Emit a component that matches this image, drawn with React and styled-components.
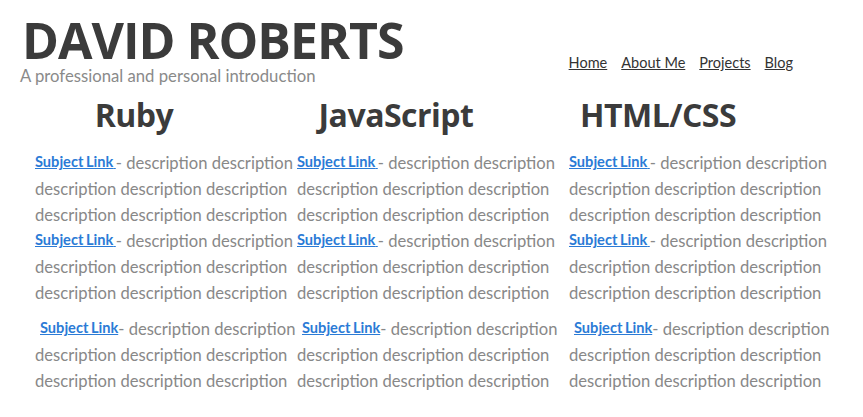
import React from 'react';
import styled, { createGlobalStyle } from 'styled-components';

const GlobalStyle = createGlobalStyle`
  body {
    margin: 0;
    background: #ffffff;
    font-family: 'Lato', 'Open Sans', sans-serif;
  }
`;

const subjects = ['Ruby', 'JavaScript', 'HTML/CSS'];
const entries = [{ spaced: false }, { spaced: false }, { spaced: true }];
const rest = 'description description description';

function App() {
  return (
    <Page>
      <GlobalStyle />
      <Header>
        <Brand>
          <Title>DAVID ROBERTS</Title>
          <Tagline>A professional and personal introduction</Tagline>
        </Brand>
        <Nav>
          <NavLink href="#">Home</NavLink>
          <NavLink href="#">About Me</NavLink>
          <NavLink href="#">Projects</NavLink>
          <NavLink href="#">Blog</NavLink>
        </Nav>
      </Header>

      <Headings>
        {subjects.map((s) => (
          <Heading key={s}>{s}</Heading>
        ))}
      </Headings>

      <Columns>
        {subjects.map((s) => (
          <Column key={s}>
            {entries.map((e, i) => (
              <Entry key={i} $spaced={e.spaced}>
                <Line>
                  <SubjectLink href="#" $spaced={e.spaced}>
                    Subject Link{e.spaced ? '' : ' '}
                  </SubjectLink>
                  - description description
                </Line>
                <Line>{rest}</Line>
                <Line>{rest}</Line>
              </Entry>
            ))}
          </Column>
        ))}
      </Columns>
    </Page>
  );
}

export default App;

const Page = styled.div`
  width: 863px;
`;

const Header = styled.header`
  display: flex;
  justify-content: space-between;
  align-items: flex-start;
  padding: 15px 0 0 20px;
`;

const Brand = styled.div`
  display: flex;
  flex-direction: column;
`;

const Title = styled.h1`
  margin: 0 0 0 2px;
  font-family: 'Open Sans', sans-serif;
  font-weight: 700;
  font-size: 50px;
  letter-spacing: -1px;
  line-height: 50px;
  color: #3b3b3b;
`;

const Tagline = styled.p`
  margin: 1px 0 0;
  font-size: 16.7px;
  line-height: 20px;
  color: #8a8a8a;
`;

const Nav = styled.nav`
  display: flex;
  gap: 14px;
  margin: 39px 70px 0 0;
`;

const NavLink = styled.a`
  font-size: 14.5px;
  color: #333333;
  text-decoration: underline;
`;

const Headings = styled.div`
  display: grid;
  grid-template-columns: 262px 262px 262px;
  padding-left: 3px;
  margin-top: 7px;
`;

const Heading = styled.h2`
  margin: 0;
  text-align: center;
  font-family: 'Open Sans', sans-serif;
  font-weight: 700;
  font-size: 32px;
  letter-spacing: -0.5px;
  line-height: 44px;
  color: #3b3b3b;
`;

const Columns = styled.div`
  display: grid;
  grid-template-columns: 262px 272px 262px;
  padding: 0 0 0 35px;
  margin-top: 13px;
`;

const Column = styled.div`
  display: flex;
  flex-direction: column;
`;

const Entry = styled.div`
  margin-top: ${(p) => (p.$spaced ? '10px' : '0')};
  font-size: 16.6px;
  line-height: 26px;
  color: #888888;
`;

const Line = styled.div`
  white-space: nowrap;
  height: 26px;
`;

const SubjectLink = styled.a`
  font-size: 14.6px;
  line-height: 1;
  font-weight: 700;
  color: #2b7bd6;
  text-decoration: underline;
  vertical-align: 2px;
  word-spacing: -1px;
  margin-left: ${(p) => (p.$spaced ? '5px' : '0')};
`;
